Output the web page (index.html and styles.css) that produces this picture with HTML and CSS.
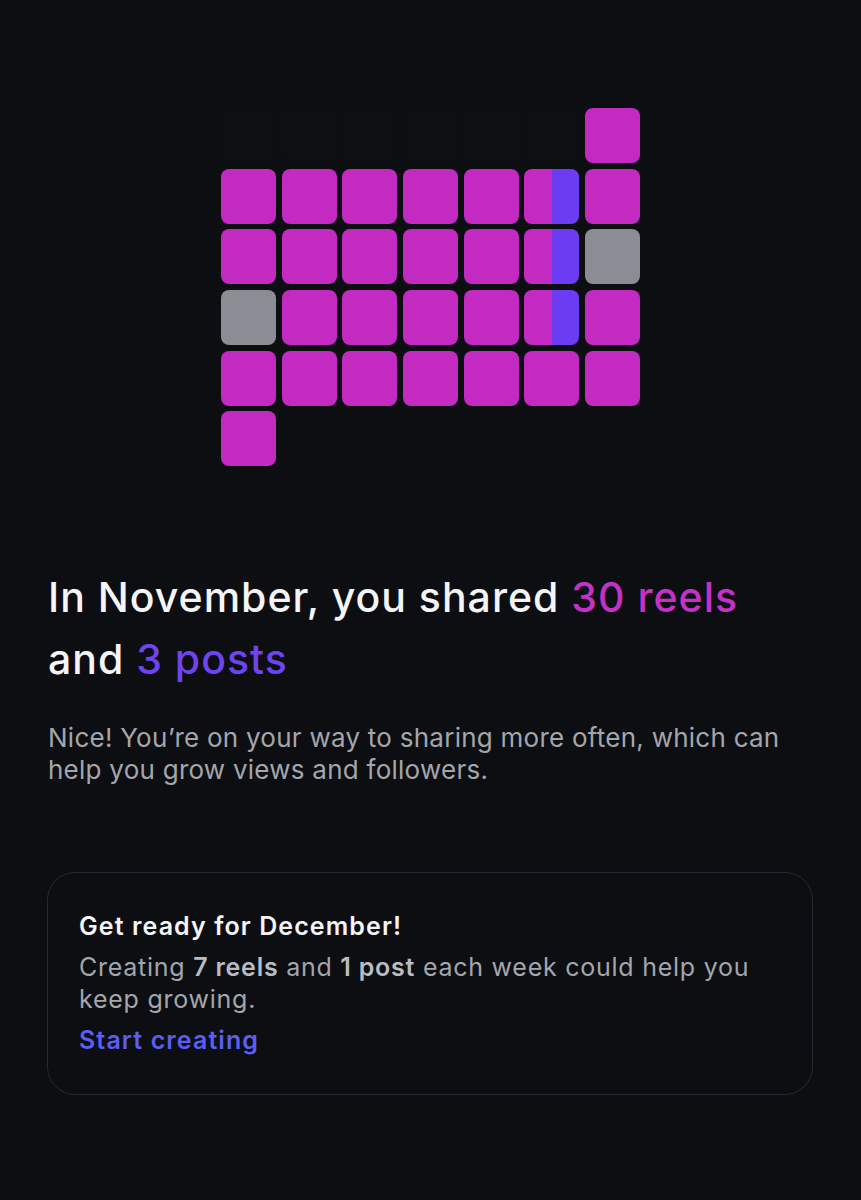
FILE: index.html
```html
<!DOCTYPE html>
<html>
<head>
    <title>November recap</title>
    <meta charset="utf-8">
    <link rel="stylesheet" href="styles.css">
</head>
<body>
    <div class="page">
        <div class="grid">
            <!-- row 1 -->
            <div class="cell empty"></div>
            <div class="cell empty"></div>
            <div class="cell empty"></div>
            <div class="cell empty"></div>
            <div class="cell empty"></div>
            <div class="cell empty"></div>
            <div class="cell reel"></div>
            <!-- row 2 -->
            <div class="cell reel"></div>
            <div class="cell reel"></div>
            <div class="cell reel"></div>
            <div class="cell reel"></div>
            <div class="cell reel"></div>
            <div class="cell split"></div>
            <div class="cell reel"></div>
            <!-- row 3 -->
            <div class="cell reel"></div>
            <div class="cell reel"></div>
            <div class="cell reel"></div>
            <div class="cell reel"></div>
            <div class="cell reel"></div>
            <div class="cell split"></div>
            <div class="cell none"></div>
            <!-- row 4 -->
            <div class="cell none"></div>
            <div class="cell reel"></div>
            <div class="cell reel"></div>
            <div class="cell reel"></div>
            <div class="cell reel"></div>
            <div class="cell split"></div>
            <div class="cell reel"></div>
            <!-- row 5 -->
            <div class="cell reel"></div>
            <div class="cell reel"></div>
            <div class="cell reel"></div>
            <div class="cell reel"></div>
            <div class="cell reel"></div>
            <div class="cell reel"></div>
            <div class="cell reel"></div>
            <!-- row 6 -->
            <div class="cell reel"></div>
        </div>

        <h1 class="headline">In November, you shared <span class="reels">30 reels</span><br>and <span class="posts">3 posts</span></h1>

        <p class="summary">Nice! You’re on your way to sharing more often, which can help you grow views and followers.</p>

        <div class="card">
            <div class="card-title">Get ready for December!</div>
            <p class="card-text">Creating <strong>7 reels</strong> and <strong>1 post</strong> each week could help you keep growing.</p>
            <a class="card-link" href="#">Start creating</a>
        </div>
    </div>
</body>
</html>
```

FILE: styles.css
```css
body {
    margin: 0;
    background-color: #0c0e12;
    font-family: Inter, "Noto Sans", sans-serif;
    color: #f5f5f7;
}
.page {
    padding: 108px 48px 0 48px;
}
.grid {
    display: grid;
    grid-template-columns: repeat(7, 55px);
    grid-auto-rows: 55px;
    gap: 5.7px;
    justify-content: center;
}
.cell {
    border-radius: 8px;
}
.empty {
    background-color: #0d0f13;
}
.reel {
    background-color: #c32ac1;
}
.none {
    background-color: #8a8d93;
}
.split {
    background: linear-gradient(to right, #c32ac1 50%, #6c3cf2 50%);
}
.headline {
    margin: 100px 0 0 0;
    font-size: 41px;
    font-weight: 500;
    line-height: 62px;
    letter-spacing: 1px;
}
.reels {
    color: #c431c6;
}
.posts {
    color: #6d44f0;
}
.summary {
    margin: 32px 0 0 0;
    font-size: 26px;
    line-height: 32px;
    letter-spacing: 0.25px;
    color: #a3a6ad;
}
.card {
    margin: 86px 0 0 -1px;
    border: 1px solid #272a30;
    border-radius: 28px;
    padding: 37px 31px 38px 31px;
}
.card-title {
    font-size: 25px;
    font-weight: 600;
    line-height: 32px;
    letter-spacing: 1.1px;
    color: #f5f5f7;
}
.card-text {
    margin: 9px 0 0 0;
    font-size: 25px;
    line-height: 32px;
    letter-spacing: 0.75px;
    color: #a3a6ad;
}
.card-text strong {
    font-weight: 600;
    color: #b9bcc2;
}
.card-link {
    display: block;
    margin-top: 9px;
    font-size: 25px;
    font-weight: 600;
    line-height: 32px;
    letter-spacing: 1.1px;
    color: #5a5ef2;
    text-decoration: none;
}
```
